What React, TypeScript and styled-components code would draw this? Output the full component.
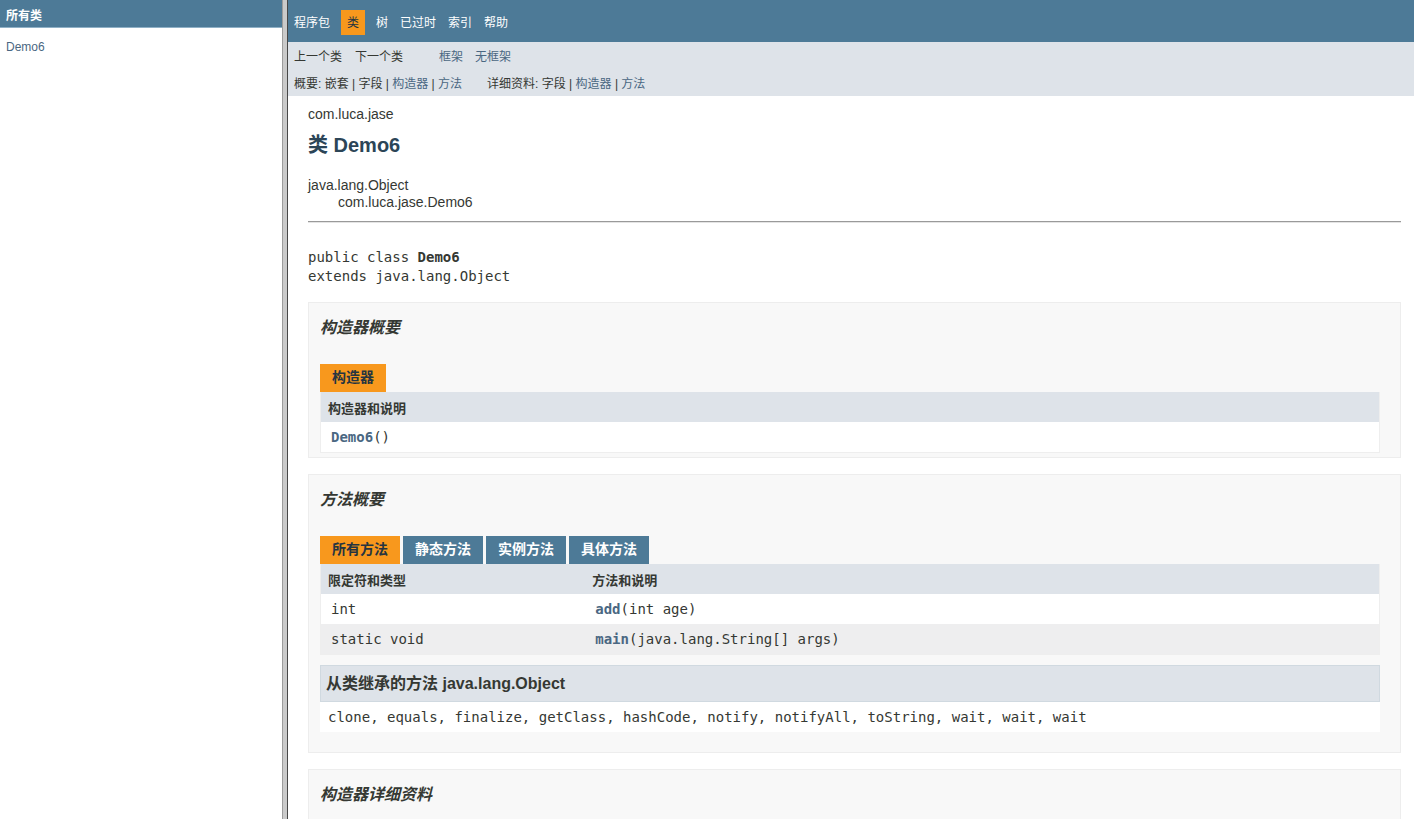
import styled, { createGlobalStyle } from 'styled-components';

const GlobalStyle = createGlobalStyle`
  html, body {
    margin: 0;
    height: 100%;
    overflow: hidden;
  }
  body {
    background: #ffffff;
    color: #353833;
    font-family: 'Liberation Sans', 'Noto Sans CJK SC', sans-serif;
    font-size: 14px;
  }
  #root {
    height: 100%;
  }
`;

const sans = `'Liberation Sans', 'Noto Sans CJK SC', sans-serif`;
const mono = `'DejaVu Sans Mono', 'Noto Sans CJK SC', monospace`;

interface IMethodRow {
  modifier: string;
  name: string;
  args: string;
}

const methods: IMethodRow[] = [
  { modifier: 'int', name: 'add', args: '(int age)' },
  { modifier: 'static void', name: 'main', args: '(java.lang.String[] args)' },
];

const methodTabs = ['所有方法', '静态方法', '实例方法', '具体方法'];
const topNavItems = ['程序包', '类', '树', '已过时', '索引', '帮助'];

export default function App() {
  return (
    <>
      <GlobalStyle />
      <Frames>
        <LeftFrame>
          <FrameBar>所有类</FrameBar>
          <ClassList>
            <li>
              <Link>Demo6</Link>
            </li>
          </ClassList>
        </LeftFrame>
        <Divider />
        <RightFrame>
          <TopNav>
            {topNavItems.map((item) => (
              <NavItem key={item} $active={item === '类'}>
                {item}
              </NavItem>
            ))}
          </TopNav>
          <SubNav>
            <SubRow>
              <SubItem>上一个类</SubItem>
              <SubItem $gap={13}>下一个类</SubItem>
              <SubItem $gap={36} $link>
                框架
              </SubItem>
              <SubItem $gap={12} $link>
                无框架
              </SubItem>
            </SubRow>
            <SubRow>
              <SubItem>
                概要: 嵌套 | 字段 | <Link>构造器</Link> | <Link>方法</Link>
              </SubItem>
              <SubItem $gap={25}>
                详细资料: 字段 | <Link>构造器</Link> | <Link>方法</Link>
              </SubItem>
            </SubRow>
          </SubNav>

          <Content>
            <PackageLabel>com.luca.jase</PackageLabel>
            <ClassTitle>类 Demo6</ClassTitle>
            <Inheritance>
              <div>java.lang.Object</div>
              <InheritChild>com.luca.jase.Demo6</InheritChild>
            </Inheritance>
            <Rule />
            <Signature>
              public class <b>Demo6</b>
              {'\n'}extends java.lang.Object
            </Signature>

            <Block>
              <BlockTitle>构造器概要</BlockTitle>
              <Tabs>
                <Tab $active>构造器</Tab>
              </Tabs>
              <SummaryTable>
                <thead>
                  <tr>
                    <HeadCell>构造器和说明</HeadCell>
                  </tr>
                </thead>
                <tbody>
                  <tr>
                    <Cell>
                      <CodeLink>Demo6</CodeLink>()
                    </Cell>
                  </tr>
                </tbody>
              </SummaryTable>
            </Block>

            <Block>
              <BlockTitle>方法概要</BlockTitle>
              <Tabs>
                {methodTabs.map((tab, i) => (
                  <Tab key={tab} $active={i === 0}>
                    {tab}
                  </Tab>
                ))}
              </Tabs>
              <SummaryTable>
                <thead>
                  <tr>
                    <HeadCell $first>限定符和类型</HeadCell>
                    <HeadCell>方法和说明</HeadCell>
                  </tr>
                </thead>
                <tbody>
                  {methods.map((m, i) => (
                    <tr key={m.name}>
                      <Cell $alt={i % 2 === 1}>{m.modifier}</Cell>
                      <Cell $alt={i % 2 === 1}>
                        <CodeLink>{m.name}</CodeLink>
                        {m.args}
                      </Cell>
                    </tr>
                  ))}
                </tbody>
              </SummaryTable>
              <Inherited>
                <InheritedTitle>从类继承的方法 java.lang.Object</InheritedTitle>
                <InheritedList>
                  clone, equals, finalize, getClass, hashCode, notify, notifyAll, toString, wait, wait, wait
                </InheritedList>
              </Inherited>
            </Block>

            <Block $tall>
              <BlockTitle>构造器详细资料</BlockTitle>
            </Block>
          </Content>
        </RightFrame>
      </Frames>
    </>
  );
}

const Frames = styled.div`
  display: flex;
  height: 100%;
`;

const LeftFrame = styled.div`
  width: 282px;
  flex-shrink: 0;
  background: #ffffff;
`;

const FrameBar = styled.h1`
  margin: 0;
  height: 28px;
  box-sizing: border-box;
  padding: 4px 0 0 6px;
  background: #4d7a97;
  border-bottom: 1px solid #8fb0c6;
  color: #ffffff;
  font-family: ${sans};
  font-size: 12px;
  font-weight: bold;
  line-height: 24px;
`;

const ClassList = styled.ul`
  list-style: none;
  margin: 0;
  padding: 12px 0 0 6px;
  font-size: 12px;
  line-height: 15px;
`;

const Link = styled.a`
  color: #4a6782;
  text-decoration: none;
`;

const Divider = styled.div`
  width: 4px;
  flex-shrink: 0;
  background: #cacaca;
  border-left: 1px solid #9c9c9c;
  border-right: 1px solid #474747;
`;

const RightFrame = styled.div`
  flex: 1;
  min-width: 0;
  overflow: hidden;
  background: #ffffff;
`;

const TopNav = styled.ul`
  display: flex;
  align-items: flex-start;
  list-style: none;
  margin: 0;
  padding: 10px 0 0 0;
  height: 42px;
  box-sizing: border-box;
  background: #4d7a97;
`;

const NavItem = styled.li<{ $active?: boolean }>`
  padding: 6px 6px 4px;
  margin: ${(p) => (p.$active ? '0 5px' : '0')};
  background: ${(p) => (p.$active ? '#f8981d' : 'transparent')};
  color: ${(p) => (p.$active ? '#253441' : '#ffffff')};
  font-size: 12px;
  line-height: 15px;
`;

const SubNav = styled.div`
  background: #dee3e9;
  height: 54px;
`;

const SubRow = styled.div`
  display: flex;
  align-items: center;
  height: 27px;
  padding-left: 6px;
  font-size: 12px;
  color: #353833;
`;

const SubItem = styled.span<{ $gap?: number; $link?: boolean }>`
  margin-left: ${(p) => p.$gap ?? 0}px;
  color: ${(p) => (p.$link ? '#4a6782' : 'inherit')};
  white-space: pre;
`;

const Content = styled.div`
  padding: 10px 13px 0 20px;
`;

const PackageLabel = styled.div`
  font-size: 14px;
  line-height: 17px;
`;

const ClassTitle = styled.h2`
  margin: 10px 0 0;
  color: #2c4557;
  font-size: 20px;
  line-height: 24px;
  font-weight: bold;
`;

const Inheritance = styled.div`
  margin-top: 20px;
  font-size: 14px;
  line-height: 17px;
`;

const InheritChild = styled.div`
  padding-left: 30px;
`;

const Rule = styled.hr`
  margin: 10px 0 0;
  border: none;
  border-top: 1px solid #9a9a9a;
  border-bottom: 1px solid #e4e4e4;
`;

const Signature = styled.pre`
  margin: 25px 0 0;
  font-family: ${mono};
  font-size: 14px;
  line-height: 19px;
  color: #353833;

  b {
    font-weight: bold;
  }
`;

const Block = styled.section<{ $tall?: boolean }>`
  margin-top: 16px;
  background: #f8f8f8;
  border: 1px solid #ededed;
  padding: 0 20px 4px 11px;
  min-height: ${(p) => (p.$tall ? '120px' : '0')};
`;

const BlockTitle = styled.h3`
  margin: 15px 0 16px;
  font-size: 16px;
  line-height: 20px;
  font-style: italic;
  font-weight: bold;
  color: #353833;
`;

const Tabs = styled.div`
  display: flex;
  gap: 3px;
  padding-top: 10px;
`;

const Tab = styled.span<{ $active?: boolean }>`
  padding: 5px 12px 7px;
  line-height: 16px;
  font-size: 14px;
  font-weight: bold;
  background: ${(p) => (p.$active ? '#f8981d' : '#4d7a97')};
  color: ${(p) => (p.$active ? '#253441' : '#ffffff')};
`;

const SummaryTable = styled.table`
  width: 100%;
  border-collapse: collapse;
  border-left: 1px solid #eeeeee;
  border-right: 1px solid #eeeeee;
  border-bottom: 1px solid #eeeeee;
`;

const HeadCell = styled.th<{ $first?: boolean }>`
  width: ${(p) => (p.$first ? '25%' : 'auto')};
  background: #dee3e9;
  text-align: left;
  padding: 7px 3px 4px 7px;
  font-size: 13px;
  line-height: 19px;
  font-weight: bold;
  color: #353833;
`;

const Cell = styled.td<{ $alt?: boolean }>`
  background: ${(p) => (p.$alt ? '#eeeeef' : '#ffffff')};
  padding: 5px 3px 5px 10px;
  font-family: ${mono};
  font-size: 14px;
  line-height: 20px;
  vertical-align: top;
`;

const CodeLink = styled.a`
  color: #4a6782;
  font-weight: bold;
  text-decoration: none;
`;

const Inherited = styled.div`
  margin: 10px 0 16px;
`;

const InheritedTitle = styled.h3`
  margin: 0;
  padding: 7px 5px;
  background: #dee3e9;
  border: 1px solid #d0d9e0;
  font-size: 16px;
  line-height: 21px;
  font-weight: bold;
  font-style: normal;
`;

const InheritedList = styled.div`
  background: #ffffff;
  padding: 5px 8px;
  font-family: ${mono};
  font-size: 14px;
  line-height: 20px;
`;
